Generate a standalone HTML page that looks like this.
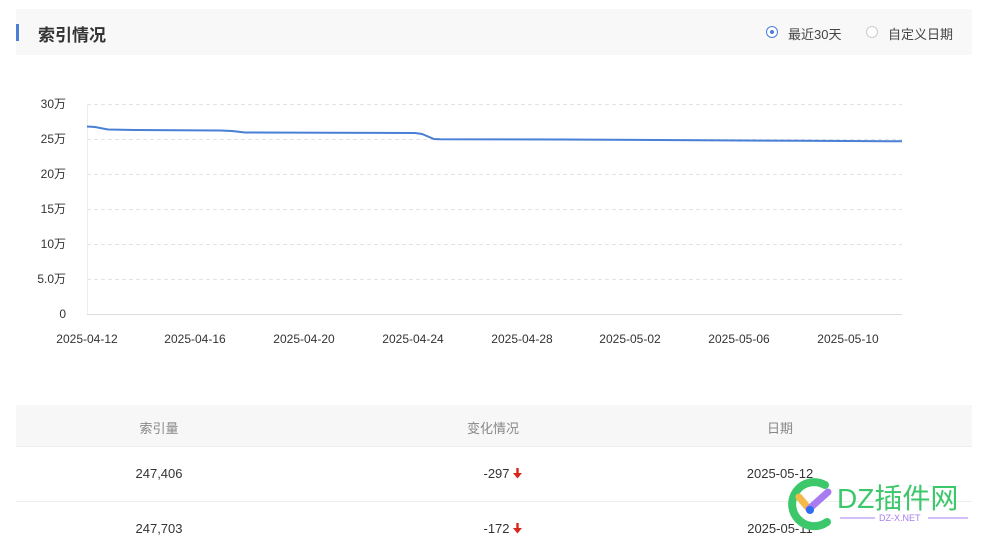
<!DOCTYPE html>
<html><head><meta charset="utf-8"><style>
body{margin:0;width:987px;height:541px;background:#fff;font-family:"Liberation Sans","Noto Sans CJK SC",sans-serif;position:relative;overflow:hidden;color:#333}
.hd{position:absolute;left:16px;top:9px;width:956px;height:46px;background:#f8f8f8}
.bar{position:absolute;left:16px;top:24px;width:3px;height:17px;background:#4a7fd6}
.t{position:absolute;left:38px;top:21px;font-size:17px;font-weight:bold;color:#333}
.r{position:absolute;top:24px;font-size:13px;color:#444}
.rad{position:absolute;top:26px;width:12px;height:12px;border-radius:50%;border:1px solid #ccc;box-sizing:border-box;background:#fff}
.th{position:absolute;left:16px;top:405px;width:956px;height:41px;background:#f7f7f7;border-bottom:1px solid #eee}
.c{position:absolute;font-size:13px;transform:translateX(-50%);white-space:nowrap}
.line{position:absolute;left:16px;width:956px;height:1px;background:#eee}
.ar{display:inline-block;vertical-align:-1px;margin-left:3px}
</style></head><body>
<div class="hd"></div><div class="bar"></div><div class="t">索引情况</div>
<div class="rad" style="left:766px;border-color:#4a7fd6"><div style="position:absolute;left:3px;top:3px;width:4px;height:4px;border-radius:50%;background:#4a7fd6"></div></div>
<div class="r" style="left:788px">最近30天</div>
<div class="rad" style="left:866px"></div>
<div class="r" style="left:888px">自定义日期</div>
<svg width="987" height="360" style="position:absolute;left:0;top:0" font-family="Liberation Sans,Noto Sans CJK SC,sans-serif" font-size="12" fill="#333">
<g stroke="#e3e3e3" stroke-dasharray="4,3">
<line x1="87" x2="902" y1="104.5" y2="104.5"/><line x1="87" x2="902" y1="139.5" y2="139.5"/><line x1="87" x2="902" y1="174.5" y2="174.5"/><line x1="87" x2="902" y1="209.5" y2="209.5"/><line x1="87" x2="902" y1="244.5" y2="244.5"/><line x1="87" x2="902" y1="279.5" y2="279.5"/></g>
<line x1="87" x2="902" y1="314.5" y2="314.5" stroke="#ddd"/>
<line x1="87.5" x2="87.5" y1="104" y2="314" stroke="#eee"/>
<g text-anchor="end"><text x="66" y="108">30万</text><text x="66" y="143">25万</text><text x="66" y="178">20万</text><text x="66" y="213">15万</text><text x="66" y="248">10万</text><text x="66" y="283">5.0万</text><text x="66" y="318">0</text></g>
<g text-anchor="middle"><text x="87" y="343">2025-04-12</text><text x="195" y="343">2025-04-16</text><text x="304" y="343">2025-04-20</text><text x="413" y="343">2025-04-24</text><text x="522" y="343">2025-04-28</text><text x="630" y="343">2025-05-02</text><text x="739" y="343">2025-05-06</text><text x="848" y="343">2025-05-10</text></g>
<path d="M87 126.5 L95 127 L108 129.5 L135 130 L220 130.5 L232 131 L245 132.5 L330 132.8 L415 133 L422 134 L434 139 L440 139.3 L560 139.5 L700 140.3 L800 140.8 L902 141.3" fill="none" stroke="#4a7fd6" stroke-width="2"/>
</svg>
<div class="th"></div>
<div class="c" style="left:159px;top:418px;color:#888">索引量</div>
<div class="c" style="left:493px;top:418px;color:#888">变化情况</div>
<div class="c" style="left:780px;top:418px;color:#888">日期</div>
<div class="c" style="left:159px;top:466px">247,406</div>
<div class="c" style="left:503px;top:466px">-297<svg class="ar" width="10" height="12"><path d="M5 1V7" stroke="#d9261c" stroke-width="2.4"/><path d="M0.5 6H9.5L5 11.5Z" fill="#d9261c"/></svg></div>
<div class="c" style="left:780px;top:466px">2025-05-12</div>
<div class="line" style="top:501px"></div>
<div class="c" style="left:159px;top:521px">247,703</div>
<div class="c" style="left:503px;top:521px">-172<svg class="ar" width="10" height="12"><path d="M5 1V7" stroke="#d9261c" stroke-width="2.4"/><path d="M0.5 6H9.5L5 11.5Z" fill="#d9261c"/></svg></div>
<div class="c" style="left:780px;top:521px">2025-05-11</div>
<svg width="200" height="70" style="position:absolute;left:785px;top:470px" font-family="Liberation Sans,Noto Sans CJK SC,sans-serif">
<path d="M40 15 A22 22 0 1 0 42 52" fill="none" stroke="#3cc76a" stroke-width="8" stroke-linecap="round"/>
<line x1="14" y1="27" x2="24" y2="39" stroke="#f5b94a" stroke-width="7" stroke-linecap="round"/>
<line x1="24" y1="39" x2="43" y2="22" stroke="#a87cf0" stroke-width="7" stroke-linecap="round"/>
<circle cx="25" cy="40" r="4" fill="#2d6ef0"/>
<text x="52" y="38" font-size="28" fill="#3cc76a">DZ插件网</text>
<line x1="55" y1="48" x2="90" y2="48" stroke="#a87cf0"/><line x1="143" y1="48" x2="183" y2="48" stroke="#a87cf0"/>
<text x="94" y="51" font-size="9" fill="#a87cf0">DZ-X.NET</text>
</svg>
</body></html>
